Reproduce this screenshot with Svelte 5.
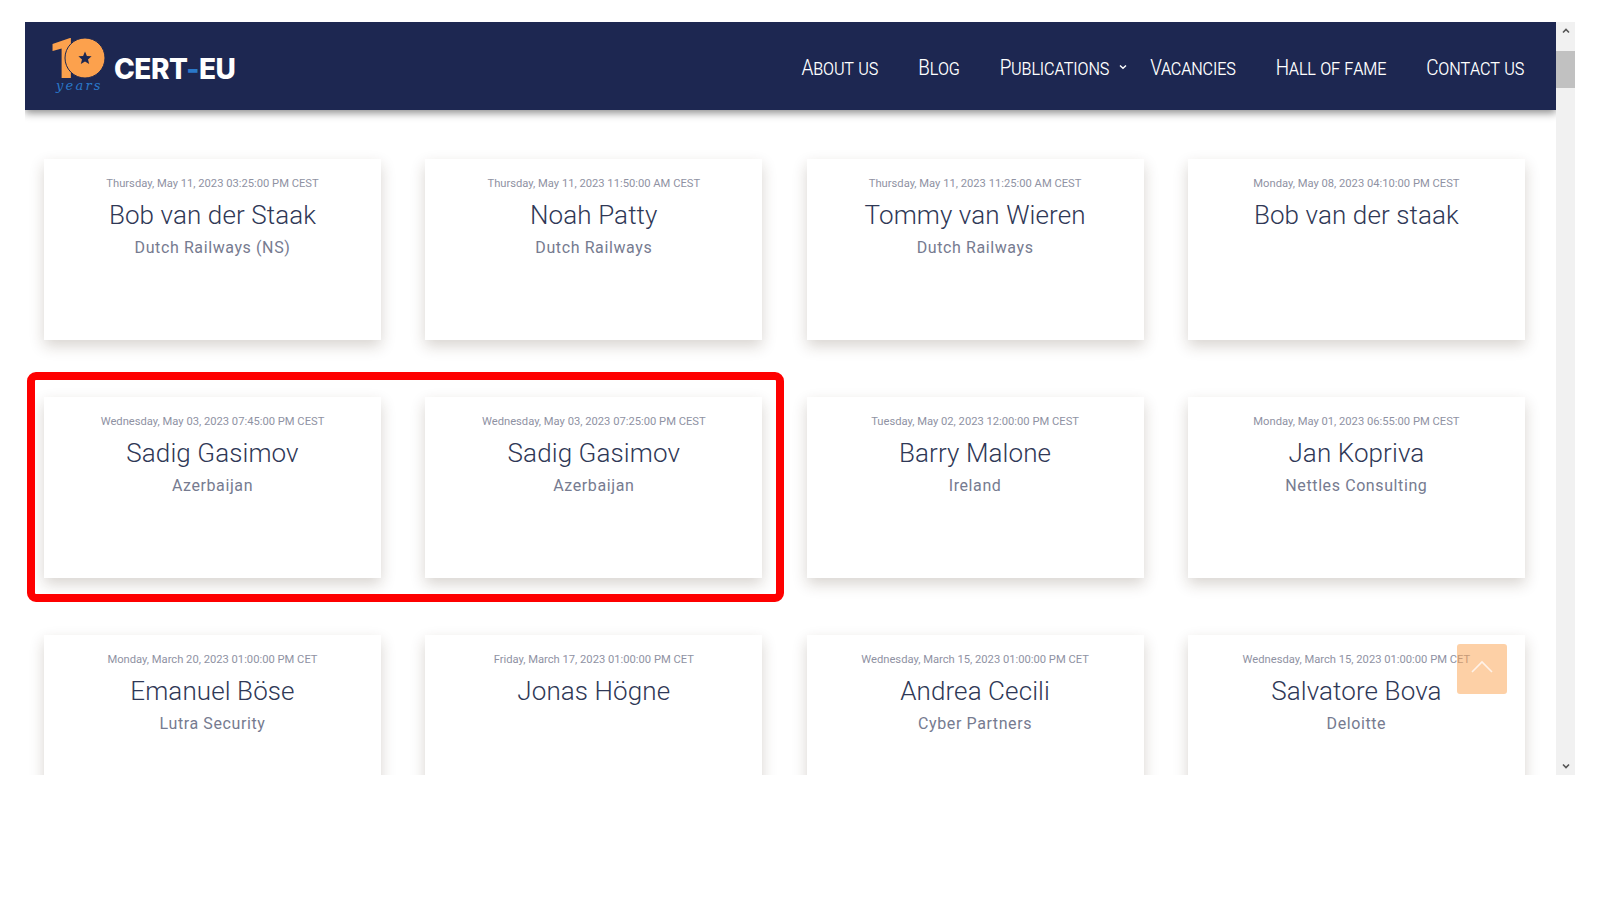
<script>
  const navItems = [
    { label: 'About us' },
    { label: 'Blog' },
    { label: 'Publications', caret: true },
    { label: 'Vacancies' },
    { label: 'Hall of fame' },
    { label: 'Contact us' }
  ];

  const entries = [
    { date: 'Thursday, May 11, 2023 03:25:00 PM CEST', name: 'Bob van der Staak', org: 'Dutch Railways (NS)' },
    { date: 'Thursday, May 11, 2023 11:50:00 AM CEST', name: 'Noah Patty', org: 'Dutch Railways' },
    { date: 'Thursday, May 11, 2023 11:25:00 AM CEST', name: 'Tommy van Wieren', org: 'Dutch Railways' },
    { date: 'Monday, May 08, 2023 04:10:00 PM CEST', name: 'Bob van der staak', org: '' },
    { date: 'Wednesday, May 03, 2023 07:45:00 PM CEST', name: 'Sadig Gasimov', org: 'Azerbaijan' },
    { date: 'Wednesday, May 03, 2023 07:25:00 PM CEST', name: 'Sadig Gasimov', org: 'Azerbaijan' },
    { date: 'Tuesday, May 02, 2023 12:00:00 PM CEST', name: 'Barry Malone', org: 'Ireland' },
    { date: 'Monday, May 01, 2023 06:55:00 PM CEST', name: 'Jan Kopriva', org: 'Nettles Consulting' },
    { date: 'Monday, March 20, 2023 01:00:00 PM CET', name: 'Emanuel Böse', org: 'Lutra Security' },
    { date: 'Friday, March 17, 2023 01:00:00 PM CET', name: 'Jonas Högne', org: '' },
    { date: 'Wednesday, March 15, 2023 01:00:00 PM CET', name: 'Andrea Cecili', org: 'Cyber Partners' },
    { date: 'Wednesday, March 15, 2023 01:00:00 PM CET', name: 'Salvatore Bova', org: 'Deloitte' }
  ];
</script>

<div class="frame">
  <div class="page">
    <header class="navbar">
      <a class="logo" href="#top">
        <svg class="mark" width="58" height="58" viewBox="0 0 58 58">
          <text x="-4" y="40" class="one">1</text>
          <circle cx="33" cy="20" r="20" fill="#fca14d" stroke="#1d2751" stroke-width="1" />
          <polygon points="33,13.5 34.9,18 39.6,18.3 36,21.4 37.2,26 33,23.4 28.8,26 30,21.4 26.4,18.3 31.1,18" fill="#1d2751" />
          <text x="4" y="52" class="years">years</text>
        </svg>
        <span class="wordmark">CERT<span class="dash">-</span>EU</span>
      </a>
      <nav class="menu">
        {#each navItems as item}
          <a class="menu-item" class:has-caret={item.caret} href="#top">
            {item.label}
            {#if item.caret}
              <svg class="caret" width="8" height="6" viewBox="0 0 8 6">
                <path d="M1 1.5 L4 4.3 L7 1.5" fill="none" stroke="#fff" stroke-width="1.4" />
              </svg>
            {/if}
          </a>
        {/each}
      </nav>
    </header>

    <main class="grid">
      {#each entries as entry}
        <article class="card">
          <div class="date">{entry.date}</div>
          <h3 class="name">{entry.name}</h3>
          <div class="org">{entry.org}</div>
        </article>
      {/each}
    </main>

    <div class="highlight"></div>

    <a class="to-top" href="#top" aria-label="Back to top">
      <svg width="22" height="14" viewBox="0 0 22 14">
        <path d="M1 12 L11 2 L21 12" fill="none" stroke="#fff2e8" stroke-width="1.6" />
      </svg>
    </a>
  </div>

  <div class="scrollbar">
    <div class="arrow">
      <svg width="8" height="6" viewBox="0 0 8 6"><path d="M1 4.5 L4 1.5 L7 4.5" fill="none" stroke="#555" stroke-width="1.6" /></svg>
    </div>
    <div class="track"><div class="thumb"></div></div>
    <div class="arrow">
      <svg width="8" height="6" viewBox="0 0 8 6"><path d="M1 1.5 L4 4.5 L7 1.5" fill="none" stroke="#555" stroke-width="1.6" /></svg>
    </div>
  </div>
</div>

<style>
  :global(body) {
    background: #fff;
    font-family: Roboto, "Liberation Sans", sans-serif;
  }
  .frame {
    display: flex;
    width: 1550px;
    height: 753px;
    margin: 22px 0 0 25px;
    overflow: hidden;
  }
  .page {
    position: relative;
    width: 1531px;
    overflow: hidden;
  }
  .navbar {
    height: 88px;
    background: #1d2751;
    box-shadow: 0 3px 8px rgba(0, 0, 0, 0.45);
    display: flex;
    align-items: center;
    justify-content: space-between;
    padding: 0 32px 0 27px;
    position: relative;
  }
  .logo {
    display: flex;
    align-items: flex-start;
    text-decoration: none;
    margin-top: 2px;
  }
  .mark {
    overflow: visible;
    margin-right: 3px;
  }
  .one {
    font-family: Roboto, sans-serif;
    font-weight: 900;
    font-size: 56px;
    fill: #fca14d;
  }
  .years {
    font-family: "DejaVu Serif", serif;
    font-style: italic;
    font-size: 13px;
    letter-spacing: 2.2px;
    fill: #2a78c9;
  }
  .wordmark {
    font-family: Inter, sans-serif;
    font-weight: 800;
    font-size: 28px;
    line-height: 32px;
    margin: 15px 0 0 1px;
    color: #fff;
    letter-spacing: -0.5px;
  }
  .dash {
    color: #2a78c9;
  }
  .menu {
    display: flex;
    align-items: center;
    gap: 40px;
  }
  .menu-item {
    font-family: Roboto, sans-serif;
    font-stretch: 75%;
    font-weight: 300;
    font-variant: small-caps;
    font-size: 22.5px;
    letter-spacing: -0.65px;
    line-height: 28px;
    color: #fff;
    text-decoration: none;
    display: flex;
    align-items: center;
    margin-top: 2px;
  }
  .menu-item.has-caret {
    margin-right: -17px;
  }
  .caret {
    margin-left: 10px;
    width: 8px;
    flex: none;
  }
  .grid {
    display: grid;
    grid-template-columns: repeat(4, 337px);
    column-gap: 44.3px;
    row-gap: 57px;
    padding: 49px 0 0 19px;
  }
  .card {
    height: 181px;
    box-sizing: border-box;
    padding-top: 16px;
    background: #fff;
    box-shadow: 0 6px 14px rgba(60, 40, 20, 0.2);
    text-align: center;
  }
  .date {
    font-size: 11.2px;
    line-height: 18px;
    color: #8f92a3;
  }
  .name {
    margin: 6px 0 0;
    font-size: 26px;
    line-height: 32px;
    font-weight: 350;
    letter-spacing: 0.1px;
    color: #2f3856;
  }
  .org {
    margin-top: 6px;
    font-size: 16px;
    line-height: 22px;
    letter-spacing: 0.6px;
    color: #767b90;
  }
  .highlight {
    position: absolute;
    left: 2px;
    top: 350px;
    width: 757px;
    height: 230px;
    box-sizing: border-box;
    border: 8px solid #fe0000;
    border-radius: 9px;
  }
  .to-top {
    position: absolute;
    left: 1432px;
    top: 622px;
    width: 50px;
    height: 50px;
    border-radius: 3px;
    background: rgba(252, 161, 77, 0.5);
    display: flex;
    align-items: center;
    justify-content: center;
    padding-bottom: 4px;
    box-sizing: border-box;
  }
  .scrollbar {
    width: 19px;
    flex: none;
    background: #f1f1f1;
    display: flex;
    flex-direction: column;
  }
  .arrow {
    height: 18px;
    display: flex;
    align-items: center;
    justify-content: center;
    flex: none;
  }
  .track {
    flex: 1;
    padding-top: 11px;
  }
  .thumb {
    height: 37px;
    background: #c1c1c1;
  }
</style>
